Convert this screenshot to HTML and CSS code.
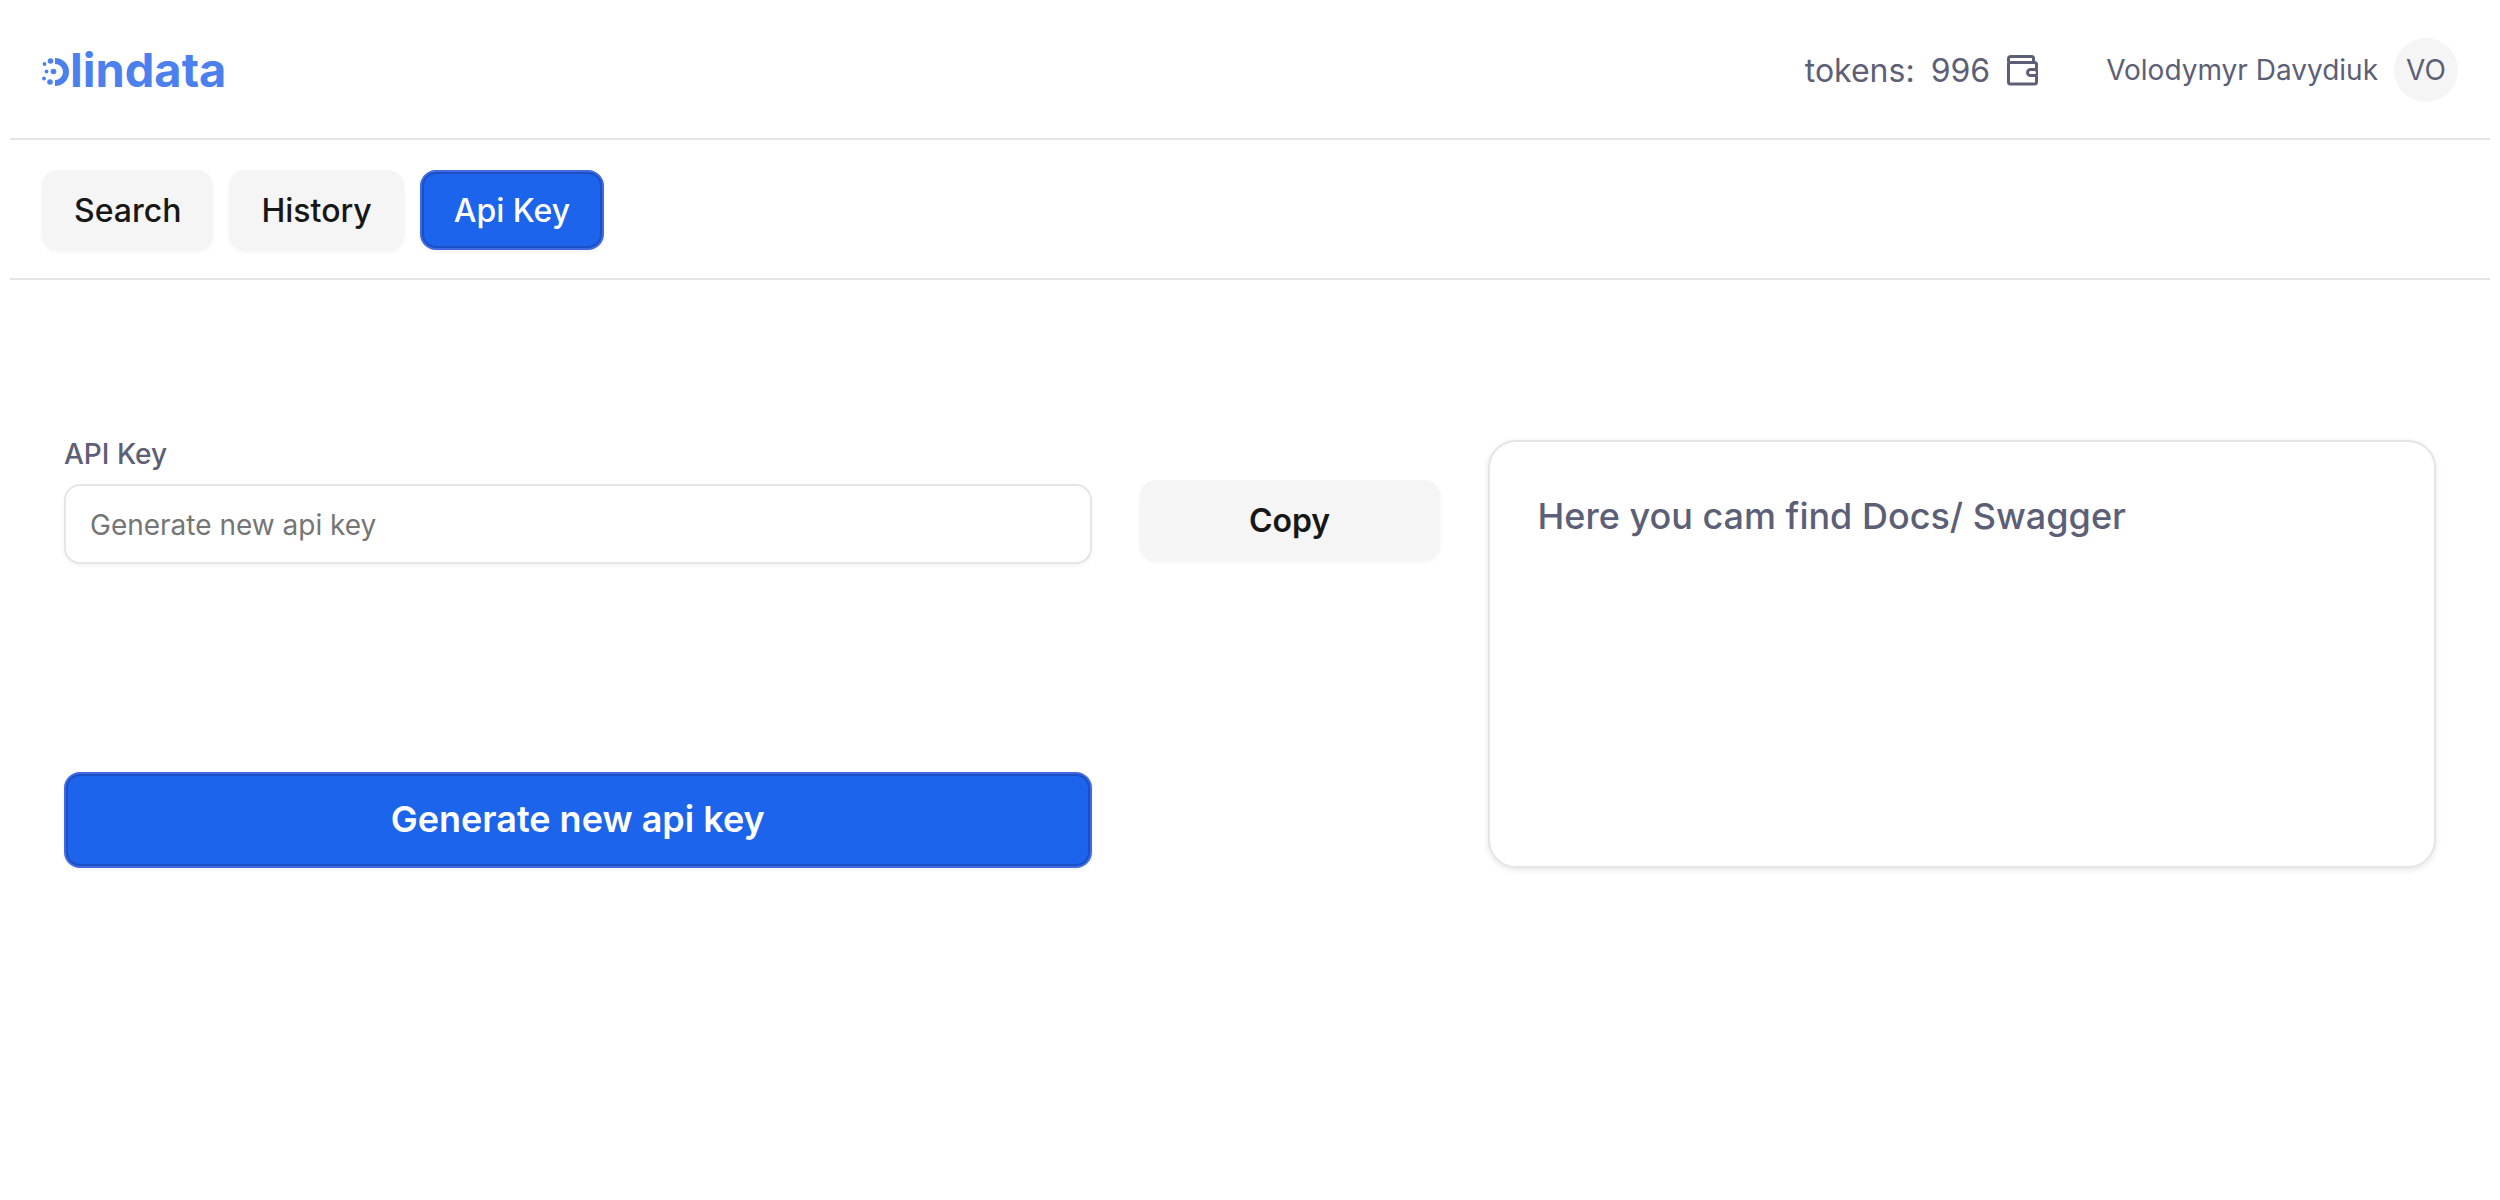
FILE: index.html
```html
<!DOCTYPE html>
<html lang="en">
<head>
    <meta charset="UTF-8">
    <meta name="viewport" content="width=device-width, initial-scale=1.0">
    <title>Olindata - Api Key</title>
    <link rel="stylesheet" href="styles.css">
</head>
<body>
    <header class="header">
        <a class="logo" href="#" aria-label="Olindata">
            <svg class="logo-mark" viewBox="0 0 28 28" aria-hidden="true">
                <path d="M13 3A11 11 0 0 1 13 25" fill="none" stroke="currentColor" stroke-width="6"/>
                <circle cx="8.500" cy="3" r="2.800"/>
                <circle cx="2.500" cy="6" r="1.900"/>
                <circle cx="4.500" cy="13.500" r="1.900"/>
                <circle cx="11.500" cy="13.500" r="2.800"/>
                <circle cx="2" cy="20.500" r="1.900"/>
                <circle cx="8" cy="24" r="2.800"/>
            </svg>
            <span class="logo-text">lindata</span>
        </a>
        <div class="account">
            <div class="tokens">
                <span>tokens:</span>
                <span>996</span>
                <svg class="wallet" viewBox="0 0 32 32" fill="none" stroke="currentColor" stroke-width="3" stroke-linejoin="round" aria-hidden="true">
                    <path d="M2.500 8.500V4.500a2 2 0 0 1 2-2h21a2 2 0 0 1 2 2v4"/>
                    <path d="M2.500 8.500H28.500a2 2 0 0 1 2 2v4.500M30.500 22v6a2 2 0 0 1-2 2H4.500a2 2 0 0 1-2-2V8.500"/>
                    <rect x="21.500" y="15.500" width="10" height="6" rx="3"/>
                </svg>
            </div>
            <div class="user">
                <span>Volodymyr Davydiuk</span>
                <span class="avatar">VO</span>
            </div>
        </div>
    </header>

    <nav class="nav">
        <button type="button" class="btn">Search</button>
        <button type="button" class="btn">History</button>
        <button type="button" class="btn btn-primary">Api Key</button>
    </nav>

    <main class="content">
        <div class="field">
            <label for="apiKey">API Key</label>
            <input type="text" id="apiKey" placeholder="Generate new api key">
        </div>
        <button type="button" class="btn copy">Copy</button>
        <button type="button" class="btn btn-primary generate">Generate new api key</button>
        <section class="card">
            <h2>Here you cam find Docs/ Swagger</h2>
        </section>
    </main>
</body>
</html>
```
FILE: styles.css
```css
/* General Styles */
* {
    box-sizing: border-box;
}

body {
    margin: 0;
    padding: 0 10px;
    font-family: Inter, sans-serif;
    font-size: 28px;
    color: #5d5f76;
    background-color: #fff;
}

/* Header */
.header {
    display: flex;
    align-items: center;
    justify-content: space-between;
    height: 140px;
    padding: 2px 32px 0;
    border-bottom: 2px solid #e5e5e5;
}

.logo {
    display: flex;
    align-items: center;
    color: #4b80ee;
    text-decoration: none;
}

.logo-mark {
    width: 28px;
    height: 28px;
    margin-top: 4px;
    fill: currentColor;
}

.logo-text {
    font-size: 47px;
    font-weight: 700;
    line-height: 48px;
}

.account,
.tokens,
.user {
    display: flex;
    align-items: center;
}

.account {
    gap: 68px;
}

.tokens {
    gap: 16px;
    font-size: 32px;
}

.wallet {
    width: 32px;
    height: 32px;
}

.user {
    gap: 16px;
}

.avatar {
    display: flex;
    align-items: center;
    justify-content: center;
    width: 64px;
    height: 64px;
    border-radius: 50%;
    background-color: #f5f5f5;
}

/* Buttons */
.btn {
    height: 80px;
    padding: 0 32px;
    border: none;
    border-radius: 16px;
    font-family: inherit;
    font-size: 32px;
    font-weight: 500;
    color: #171717;
    background-color: #f5f5f5;
    box-shadow: 0 2px 4px rgba(0, 0, 0, 0.05);
    cursor: pointer;
}

.btn-primary {
    border: 2px solid #4169e1;
    color: #fff;
    background-color: #1b64eb;
    box-shadow: inset 0 0 0 2px #1b50c5, 0 2px 4px rgba(0, 0, 0, 0.05);
}

.nav {
    display: flex;
    gap: 16px;
    padding: 30px 32px 28px;
    border-bottom: 2px solid #e5e5e5;
}

/* Api key form */
.content {
    display: grid;
    grid-template-columns: 13fr 300px 12fr;
    column-gap: 48px;
    padding: 160px 54px;
}

.field {
    display: flex;
    flex-direction: column;
    gap: 16px;
}

.field label {
    line-height: 28px;
    font-weight: 500;
}

.field input {
    height: 80px;
    padding: 2px 24px 0;
    border: 2px solid #e5e5e5;
    border-radius: 16px;
    font-family: inherit;
    font-size: 28px;
    color: #171717;
    background-color: #fff;
    box-shadow: 0 2px 4px rgba(0, 0, 0, 0.05);
}

.field input::placeholder {
    color: #757575;
}

.copy {
    margin-top: 40px;
    font-weight: 600;
}

.generate {
    grid-row: 2;
    align-self: end;
    height: 96px;
    padding-bottom: 2px;
    font-size: 36px;
    font-weight: 600;
}

.card {
    grid-column: 3;
    grid-row: 1 / 3;
    min-height: 428px;
    padding: 46px 48px;
    border: 2px solid #e5e5e5;
    border-radius: 28px;
    background-color: #fff;
    box-shadow: 0 2px 6px rgba(0, 0, 0, 0.1);
}

.card h2 {
    margin: 0;
    font-size: 36px;
    font-weight: 500;
    line-height: 56px;
}
```
